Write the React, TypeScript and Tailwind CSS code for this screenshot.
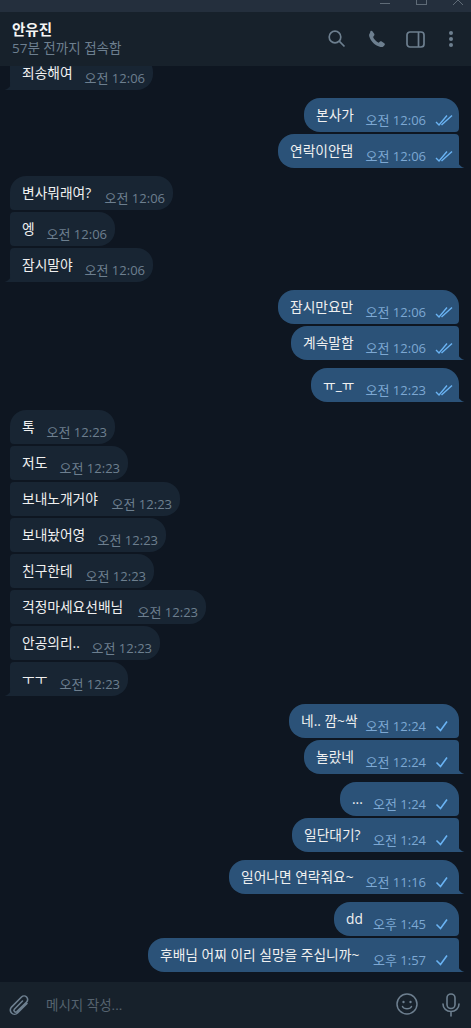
const fontStack = "font-['Open_Sans','Noto_Sans_CJK_KR',sans-serif]";

type Message = {
  text: string;
  time: string;
  out?: boolean;
  width: string;
  check?: "single" | "double";
  tail?: boolean;
  first?: boolean;
  groupEnd?: boolean;
};

const messages: Message[] = [
  { text: "본사가", time: "오전 12:06", out: true, width: "w-[155px]", check: "double", first: true },
  { text: "연락이안댐", time: "오전 12:06", out: true, width: "w-[181px]", check: "double", tail: true, groupEnd: true },
  { text: "변사뭐래여?", time: "오전 12:06", width: "w-[163px]", first: true },
  { text: "엥", time: "오전 12:06", width: "w-[105px]" },
  { text: "잠시말야", time: "오전 12:06", width: "w-[143px]", tail: true, groupEnd: true },
  { text: "잠시만요만", time: "오전 12:06", out: true, width: "w-[181px]", check: "double", first: true },
  { text: "계속말함", time: "오전 12:06", out: true, width: "w-[168px]", check: "double", tail: true, groupEnd: true },
  { text: "ㅠ_ㅠ", time: "오전 12:23", out: true, width: "w-[148px]", check: "double", first: true, tail: true, groupEnd: true },
  { text: "톡", time: "오전 12:23", width: "w-[105px]", first: true },
  { text: "저도", time: "오전 12:23", width: "w-[118px]" },
  { text: "보내노개거야", time: "오전 12:23", width: "w-[170px]" },
  { text: "보내놨어영", time: "오전 12:23", width: "w-[156px]" },
  { text: "친구한테", time: "오전 12:23", width: "w-[144px]" },
  { text: "걱정마세요선배님", time: "오전 12:23", width: "w-[196px]" },
  { text: "안공의리..", time: "오전 12:23", width: "w-[150px]" },
  { text: "ㅜㅜ", time: "오전 12:23", width: "w-[118px]", tail: true, groupEnd: true },
  { text: "네.. 깜~싹", time: "오전 12:24", out: true, width: "w-[170px]", check: "single", first: true },
  { text: "놀랐네", time: "오전 12:24", out: true, width: "w-[155px]", check: "single", tail: true, groupEnd: true },
  { text: "...", time: "오전 1:24", out: true, width: "w-[119px]", check: "single", first: true },
  { text: "일단대기?", time: "오전 1:24", out: true, width: "w-[167px]", check: "single", tail: true, groupEnd: true },
  { text: "일어나면 연락줘요~", time: "오전 11:16", out: true, width: "w-[230px]", check: "single", first: true, tail: true, groupEnd: true },
  { text: "dd", time: "오후 1:45", out: true, width: "w-[125px]", check: "single", first: true },
  { text: "후배님 어찌 이리 실망을 주십니까~", time: "오후 1:57", out: true, width: "w-[311px]", check: "single", tail: true },
];

function Checks({ kind }: { kind: "single" | "double" }) {
  return (
    <svg width="18" height="12" viewBox="0 0 18 12" fill="none" stroke="#6ab3f3" className="shrink-0">
      {kind === "double" ? (
        <>
          <path d="M1 8l3 3L12 1.500" strokeWidth="1.400" />
          <path d="M6.500 11L17 1.500" strokeWidth="1.400" />
        </>
      ) : (
        <path d="M1.500 6.500l4 4L12 1.500" strokeWidth="1.600" />
      )}
    </svg>
  );
}

function Tail({ out }: { out?: boolean }) {
  return (
    <svg
      width="7"
      height="8"
      viewBox="0 0 7 8"
      className={`absolute bottom-0 ${out ? "-right-[6px]" : "-left-[6px] -scale-x-100"}`}
    >
      <path d="M0 0C0 4 2 6.500 6.500 8H0z" fill={out ? "#2b5278" : "#182533"} />
    </svg>
  );
}

function Bubble({ m }: { m: Message }) {
  const corners = m.out
    ? `rounded-l-2xl ${m.first ? "rounded-tr-2xl" : "rounded-tr-[4px]"} ${m.tail ? "rounded-br-none" : "rounded-br-[4px]"}`
    : `rounded-r-2xl ${m.first ? "rounded-tl-2xl" : "rounded-tl-[4px]"} ${m.tail ? "rounded-bl-none" : "rounded-bl-[4px]"}`;

  return (
    <div className={`flex shrink-0 ${m.out ? "justify-end" : "justify-start"} ${m.groupEnd ? "mb-2" : "mb-0.5"}`}>
      <div
        className={`relative flex h-[34px] shrink-0 items-start justify-between pl-3 ${m.out ? "pr-[6px] bg-[#2b5278]" : "pr-2 bg-[#182533]"} ${m.width} ${corners}`}
      >
        <span className="mt-2 whitespace-nowrap text-[13.75px] leading-[18px] text-[#f0f0f0]">{m.text}</span>
        <span className="mt-[14px] flex items-center gap-[9px]">
          <span className={`whitespace-nowrap text-[13px] leading-[16px] ${m.out ? "text-[#7da8d3]" : "text-[#6d7f8f]"}`}>
            {m.time}
          </span>
          {m.check && <Checks kind={m.check} />}
        </span>
        {m.tail && <Tail out={m.out} />}
      </div>
    </div>
  );
}

export default function App() {
  return (
    <div className={`flex h-[1028px] w-[471px] flex-col overflow-hidden bg-[#0e1621] ${fontStack}`}>
      {/* window title bar, clipped at the top */}
      <div className="relative h-3 shrink-0 overflow-hidden bg-[#242f3d]">
        <div className="absolute left-[380px] top-[3px] h-px w-[10px] bg-[#5f6b77]" />
        <div className="absolute -top-[5px] left-[416px] h-[10px] w-[11px] border border-[#5f6b77]" />
        <svg width="10" height="10" viewBox="0 0 10 10" className="absolute -top-[5px] left-[453px]" stroke="#5f6b77" strokeWidth="1">
          <path d="M0 0l10 10M10 0L0 10" />
        </svg>
      </div>

      {/* chat header */}
      <div className="relative z-10 flex h-[54px] shrink-0 items-center justify-between bg-[#17212b] pl-3 pr-[17px]">
        <div className="flex flex-col">
          <span className="text-[14.5px] font-bold leading-[19px] text-[#f5f5f5]">안유진</span>
          <span className="text-[13.5px] leading-[19px] text-[#6d7f8f]">57분 전까지 접속함</span>
        </div>
        <div className="flex items-center">
          <svg width="18" height="18" viewBox="0 0 18 18" fill="none" stroke="#6d7f8f" strokeWidth="1.700" className="mr-[21px]">
            <circle cx="7" cy="7" r="5.800" />
            <path d="M11.200 11.200l5.300 5.300" />
          </svg>
          <svg width="20" height="20" viewBox="0 0 20 20" fill="#6d7f8f" className="mr-[19px]">
            <path d="M3.400 2.200c.6-.6 1.500-.6 2 .1l1.800 2.500c.4.500.4 1.200 0 1.700L6.100 7.900c.8 2.200 3.200 4.800 5.600 5.800l1.300-1.100c.5-.4 1.200-.5 1.700-.1l2.600 1.700c.7.400.8 1.400.2 2l-.9 1c-.8.800-2 1.100-3.200.7C8.200 16.500 4.100 12.600 2.300 7.400 1.900 6.100 2.200 4.800 3 4z" />
          </svg>
          <svg width="19" height="17" viewBox="0 0 19 17" fill="none" stroke="#6d7f8f" strokeWidth="1.700" className="mr-[23px]">
            <rect x="1" y="1" width="17" height="15" rx="3" />
            <path d="M12.500 1v15" />
          </svg>
          <svg width="6" height="18" viewBox="0 0 6 18" fill="#6d7f8f">
            <circle cx="3" cy="3" r="2" />
            <circle cx="3" cy="9" r="2" />
            <circle cx="3" cy="15" r="2" />
          </svg>
        </div>
      </div>

      {/* messages, pinned to the bottom so the oldest one runs under the header */}
      <div className="flex min-h-0 flex-1 flex-col justify-end overflow-hidden pb-2 pl-[10px] pr-3">
        <div className="mb-2 flex shrink-0">
          <div className="relative flex h-[34px] w-[143px] shrink-0 items-start justify-between rounded-r-2xl bg-[#182533] pl-3 pr-2">
            <span className="mt-2 whitespace-nowrap text-[13.75px] leading-[18px] text-[#f0f0f0]">죄송해여</span>
            <span className="mt-[14px] whitespace-nowrap text-[13px] leading-[16px] text-[#6d7f8f]">오전 12:06</span>
            <Tail />
          </div>
        </div>
        {messages.map((m, i) => (
          <Bubble key={i} m={m} />
        ))}
      </div>

      {/* composer */}
      <div className="flex h-[46px] shrink-0 items-center justify-between bg-[#17212b] pl-[7px] pr-[11px]">
        <div className="flex items-center">
          <svg width="22" height="24" viewBox="0 0 22 24" fill="none" stroke="#6d7f8f" strokeWidth="1.600" strokeLinecap="round" className="mr-[17px]">
            <path d="M20 10.500L10.500 20a4.200 4.200 0 0 1-6-5.900L14.500 4a3.600 3.600 0 0 1 5.100 5.100L9.800 18.600a1.700 1.700 0 0 1-2.400-2.400L15.500 8" />
          </svg>
          <span className="text-[13.5px] text-[#56636f]">메시지 작성...</span>
        </div>
        <div className="flex items-center">
          <svg width="22" height="22" viewBox="0 0 22 22" fill="none" stroke="#6d7f8f" strokeWidth="1.500" className="mb-[2px] mr-[24px]">
            <circle cx="11" cy="11" r="10" />
            <circle cx="7.500" cy="9" r="1.200" fill="#6d7f8f" stroke="none" />
            <circle cx="14.500" cy="9" r="1.200" fill="#6d7f8f" stroke="none" />
            <path d="M6.500 13.500c1.500 3 7.500 3 9 0" strokeLinecap="round" />
          </svg>
          <svg width="18" height="24" viewBox="0 0 18 24" fill="none" stroke="#6d7f8f" strokeWidth="1.600" strokeLinecap="round">
            <rect x="5" y="1" width="8" height="14.500" rx="4" />
            <path d="M1 11c0 4.500 3.500 7.500 8 7.500s8-3 8-7.500M9 18.500V23" />
          </svg>
        </div>
      </div>
    </div>
  );
}
